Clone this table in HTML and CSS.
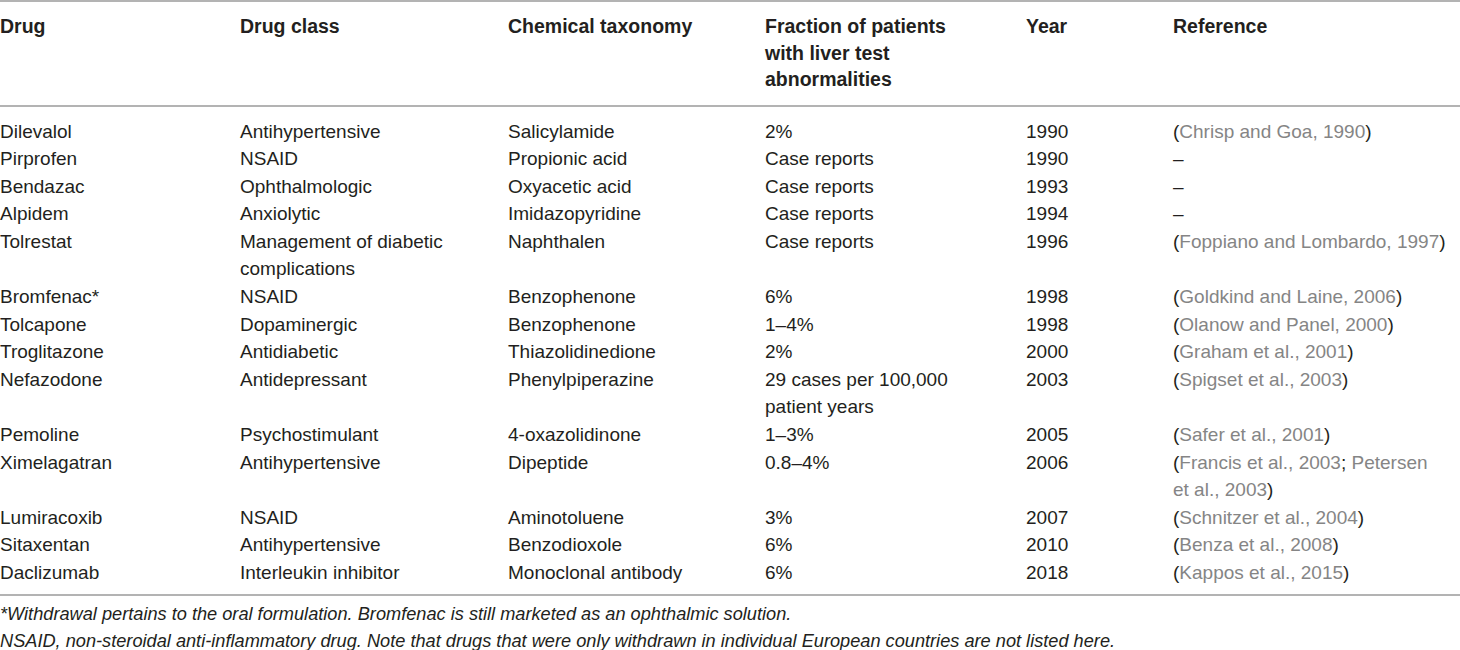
FILE: index.html
```html
<!DOCTYPE html>
<html>
<head>
<meta charset="utf-8">
<link rel="stylesheet" href="styles.css">
</head>
<body>
<div class="wrap">
<table class="tbl">
<colgroup>
<col class="c1"><col class="c2"><col class="c3"><col class="c4"><col class="c5"><col class="c6">
</colgroup>
<thead>
<tr><th>Drug</th><th>Drug class</th><th>Chemical taxonomy</th><th class="frac">Fraction of patients with liver test abnormalities</th><th>Year</th><th class="refcell">Reference</th></tr>
</thead>
<tbody>
<tr class="first"><td>Dilevalol</td><td>Antihypertensive</td><td>Salicylamide</td><td class="frac">2%</td><td>1990</td><td class="refcell">(<span class="ref">Chrisp and Goa, 1990</span>)</td></tr>
<tr><td>Pirprofen</td><td>NSAID</td><td>Propionic acid</td><td class="frac">Case reports</td><td>1990</td><td class="refcell">–</td></tr>
<tr><td>Bendazac</td><td>Ophthalmologic</td><td>Oxyacetic acid</td><td class="frac">Case reports</td><td>1993</td><td class="refcell">–</td></tr>
<tr><td>Alpidem</td><td>Anxiolytic</td><td>Imidazopyridine</td><td class="frac">Case reports</td><td>1994</td><td class="refcell">–</td></tr>
<tr><td>Tolrestat</td><td>Management of diabetic complications</td><td>Naphthalen</td><td class="frac">Case reports</td><td>1996</td><td class="refcell">(<span class="ref">Foppiano and Lombardo, 1997</span>)</td></tr>
<tr><td>Bromfenac*</td><td>NSAID</td><td>Benzophenone</td><td class="frac">6%</td><td>1998</td><td class="refcell">(<span class="ref">Goldkind and Laine, 2006</span>)</td></tr>
<tr><td>Tolcapone</td><td>Dopaminergic</td><td>Benzophenone</td><td class="frac">1–4%</td><td>1998</td><td class="refcell">(<span class="ref">Olanow and Panel, 2000</span>)</td></tr>
<tr><td>Troglitazone</td><td>Antidiabetic</td><td>Thiazolidinedione</td><td class="frac">2%</td><td>2000</td><td class="refcell">(<span class="ref">Graham et al., 2001</span>)</td></tr>
<tr><td>Nefazodone</td><td>Antidepressant</td><td>Phenylpiperazine</td><td class="frac">29 cases per 100,000 patient years</td><td>2003</td><td class="refcell">(<span class="ref">Spigset et al., 2003</span>)</td></tr>
<tr><td>Pemoline</td><td>Psychostimulant</td><td>4-oxazolidinone</td><td class="frac">1–3%</td><td>2005</td><td class="refcell">(<span class="ref">Safer et al., 2001</span>)</td></tr>
<tr><td>Ximelagatran</td><td>Antihypertensive</td><td>Dipeptide</td><td class="frac">0.8–4%</td><td>2006</td><td class="refcell">(<span class="ref">Francis et al., 2003</span>; <span class="ref">Petersen et al., 2003</span>)</td></tr>
<tr><td>Lumiracoxib</td><td>NSAID</td><td>Aminotoluene</td><td class="frac">3%</td><td>2007</td><td class="refcell">(<span class="ref">Schnitzer et al., 2004</span>)</td></tr>
<tr><td>Sitaxentan</td><td>Antihypertensive</td><td>Benzodioxole</td><td class="frac">6%</td><td>2010</td><td class="refcell">(<span class="ref">Benza et al., 2008</span>)</td></tr>
<tr class="last"><td>Daclizumab</td><td>Interleukin inhibitor</td><td>Monoclonal antibody</td><td class="frac">6%</td><td>2018</td><td class="refcell">(<span class="ref">Kappos et al., 2015</span>)</td></tr>
</tbody>
</table>
<div class="notes">
<p>*Withdrawal pertains to the oral formulation. Bromfenac is still marketed as an ophthalmic solution.</p>
<p>NSAID, non-steroidal anti-inflammatory drug. Note that drugs that were only withdrawn in individual European countries are not listed here.</p>
</div>
</div>
</body>
</html>
```

FILE: styles.css
```css
html, body {
  margin: 0;
  padding: 0;
  background: #ffffff;
}
body {
  font-family: "Liberation Sans", Arial, sans-serif;
  color: #231f20;
  font-size: 19px;
}
.wrap {
  width: 1460px;
}
.tbl {
  width: 1460px;
  border-collapse: collapse;
  table-layout: fixed;
}
.c1 { width: 240px; }
.c2 { width: 268px; }
.c3 { width: 257px; }
.c4 { width: 261px; }
.c5 { width: 147px; }
.c6 { width: 287px; }
.tbl thead tr {
  border-top: 2px solid #b3b3b3;
  border-bottom: 2px solid #b3b3b3;
}
.tbl th {
  text-align: left;
  vertical-align: top;
  font-weight: bold;
  font-size: 19.5px;
  line-height: 26.5px;
  padding: 11px 20px 12px 0;
}
.tbl td {
  vertical-align: top;
  padding: 0 20px 0 0;
  line-height: 27.6px;
}
.tbl th.frac,
.tbl td.frac {
  padding-right: 50px;
}
.tbl th.refcell,
.tbl td.refcell {
  padding-right: 12px;
}
.tbl tr.first td {
  padding-top: 11px;
}
.tbl tr.last td {
  padding-bottom: 7px;
}
.tbl tbody tr.last {
  border-bottom: 2px solid #b3b3b3;
}
.ref {
  color: #858585;
}
.notes {
  padding-top: 5px;
  font-style: italic;
  font-size: 18.2px;
}
.notes p {
  margin: 0;
  line-height: 27px;
}
```
